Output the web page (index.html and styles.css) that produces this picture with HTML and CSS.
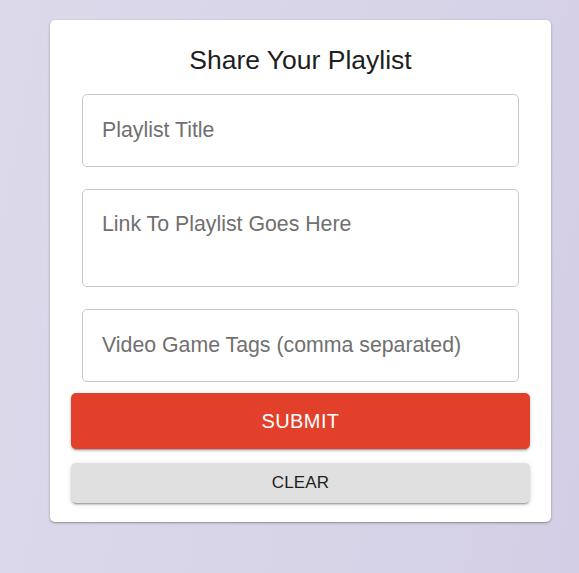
FILE: index.html
```html
<!DOCTYPE html>
<html lang="en">
<head>
<meta charset="utf-8">
<title>Share Your Playlist</title>
<link rel="stylesheet" href="styles.css">
</head>
<body>
<main class="page">
  <form class="card">
    <h1 class="title">Share Your Playlist</h1>
    <div class="fields">
      <input class="field" type="text" placeholder="Playlist Title">
      <textarea class="field field-multi" placeholder="Link To Playlist Goes Here"></textarea>
      <input class="field" type="text" placeholder="Video Game Tags (comma separated)">
    </div>
    <button class="btn btn-submit" type="button">SUBMIT</button>
    <button class="btn btn-clear" type="button">CLEAR</button>
  </form>
</main>
</body>
</html>
```

FILE: styles.css
```css
* { box-sizing: border-box; }

html, body {
  margin: 0;
  height: 100%;
}

body {
  font-family: "Liberation Sans", Arial, sans-serif;
  background: linear-gradient(100deg, #dcd9eb 0%, #d8d4e8 60%, #d3cee5 100%);
  overflow: hidden;
}

.page {
  padding: 20px 0 0 50px;
}

.card {
  width: 501px;
  background: #ffffff;
  border-radius: 5px;
  box-shadow: 0 1px 3px rgba(0, 0, 0, 0.28), 0 1px 1px rgba(0, 0, 0, 0.1);
  padding: 25px 21px 19px;
  display: flex;
  flex-direction: column;
}

.title {
  margin: 0 0 19px;
  font-size: 26.5px;
  line-height: 30px;
  font-weight: 400;
  color: #1e1e1e;
  text-align: center;
}

.fields {
  display: flex;
  flex-direction: column;
  gap: 22px;
  padding: 0 11px;
}

.field {
  display: block;
  width: 100%;
  height: 73px;
  border: 1px solid #c9c9c9;
  border-radius: 5px;
  padding: 0 19px;
  font-family: "Liberation Sans", Arial, sans-serif;
  font-size: 21.3px;
  color: #222222;
  background: #ffffff;
  outline: none;
}

.field-multi {
  height: 98px;
  padding: 22px 19px;
  line-height: 25px;
  resize: none;
}

.field::placeholder {
  color: #707070;
  opacity: 1;
}

.btn {
  display: block;
  width: 100%;
  border: none;
  border-radius: 5px;
  font-family: "Liberation Sans", Arial, sans-serif;
  cursor: pointer;
  box-shadow: 0 3px 1px -2px rgba(0, 0, 0, 0.2), 0 2px 2px 0 rgba(0, 0, 0, 0.14), 0 1px 5px 0 rgba(0, 0, 0, 0.12);
}

.btn-submit {
  margin-top: 11px;
  height: 56px;
  background: #e2402a;
  color: #ffffff;
  font-size: 20px;
  letter-spacing: 0.4px;
}

.btn-clear {
  margin-top: 14px;
  height: 40px;
  background: #e0e0e0;
  color: #1e1e1e;
  font-size: 17px;
  letter-spacing: 0.2px;
}
```
